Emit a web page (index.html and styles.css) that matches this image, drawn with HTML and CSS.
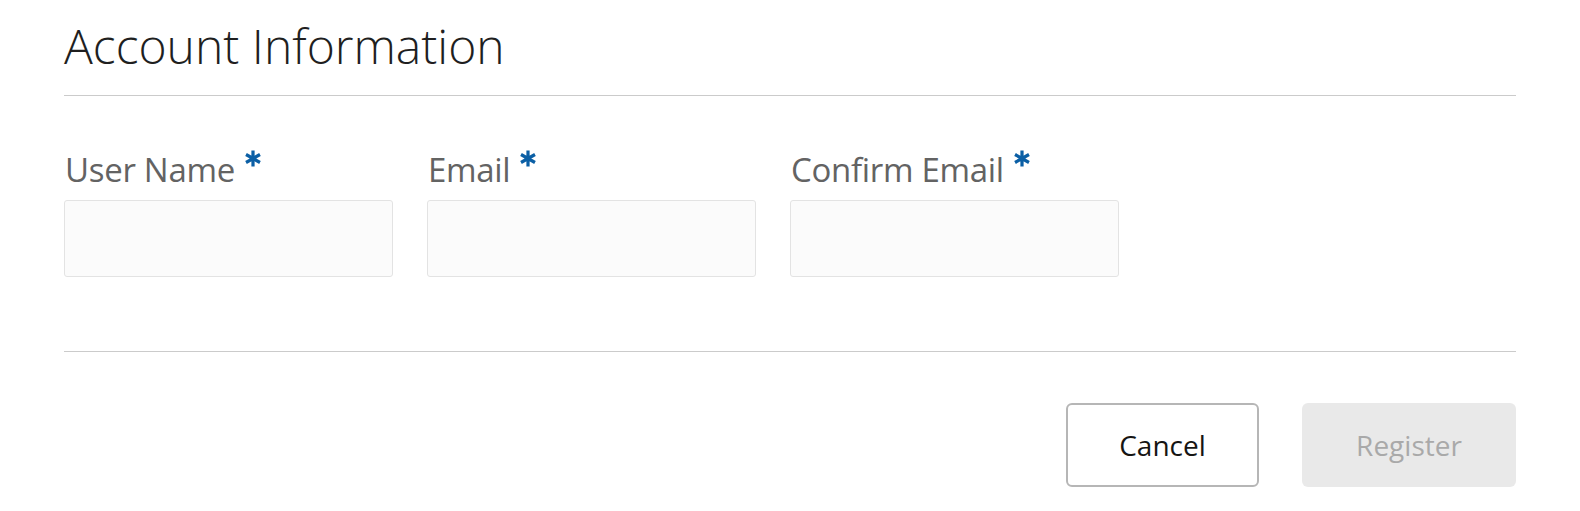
FILE: index.html
```html
<!DOCTYPE html>
<html lang="en">
<head>
<meta charset="utf-8">
<title>Account Information</title>
<link rel="stylesheet" href="styles.css">
</head>
<body>
<div class="page">
  <header class="section-head">
    <h1 class="title">Account Information</h1>
  </header>
  <form class="form">
    <div class="fields">
      <div class="field">
        <label class="label">User Name<svg class="req" viewBox="0 0 18 18" aria-hidden="true"><path d="M9 0.5V17.5M1.6 4.75L16.4 13.25M1.6 13.25L16.4 4.75"/></svg></label>
        <div class="input"></div>
      </div>
      <div class="field">
        <label class="label">Email<svg class="req" viewBox="0 0 18 18" aria-hidden="true"><path d="M9 0.5V17.5M1.6 4.75L16.4 13.25M1.6 13.25L16.4 4.75"/></svg></label>
        <div class="input"></div>
      </div>
      <div class="field">
        <label class="label">Confirm Email<svg class="req" viewBox="0 0 18 18" aria-hidden="true"><path d="M9 0.5V17.5M1.6 4.75L16.4 13.25M1.6 13.25L16.4 4.75"/></svg></label>
        <div class="input"></div>
      </div>
    </div>
    <div class="actions">
      <button type="button" class="btn btn-cancel">Cancel</button>
      <button type="button" class="btn btn-register" disabled>Register</button>
    </div>
  </form>
</div>
</body>
</html>
```

FILE: styles.css
```css
html, body {
  margin: 0;
  padding: 0;
  background: #ffffff;
}
body {
  font-family: "Open Sans", "Liberation Sans", sans-serif;
}
.page {
  padding: 16px 64px 0 64px;
}
.section-head {
  border-bottom: 1px solid #cbcbcb;
  padding-bottom: 19px;
}
.title {
  margin: 0;
  font-size: 48px;
  font-weight: 300;
  line-height: 60px;
  color: #1f1f1f;
  letter-spacing: 0;
}
.form {
  margin: 0;
}
.fields {
  display: flex;
  gap: 34px;
  padding-top: 54px;
  padding-bottom: 74px;
  border-bottom: 1px solid #cbcbcb;
}
.field {
  width: 329px;
  display: flex;
  flex-direction: column;
}
.label {
  display: flex;
  align-items: flex-start;
  font-size: 33px;
  line-height: 40px;
  height: 40px;
  color: #636363;
  padding-left: 1px;
  letter-spacing: -0.3px;
}
.req {
  width: 18px;
  height: 17px;
  margin-left: 9px;
  margin-top: 0px;
  fill: none;
  stroke: #0b5fa5;
  stroke-width: 3.4;
  stroke-linecap: butt;
}
.input {
  margin-top: 10px;
  height: 75px;
  background: #fbfbfb;
  border: 1px solid #e3e3e3;
  border-radius: 3px;
}
.actions {
  display: flex;
  justify-content: flex-end;
  gap: 43px;
  padding-top: 51px;
}
.btn {
  height: 84px;
  border-radius: 6px;
  font-family: "Open Sans", "Liberation Sans", sans-serif;
  font-size: 28px;
  padding: 0;
  cursor: pointer;
}
.btn-cancel {
  width: 193px;
  background: #ffffff;
  border: 2px solid #b6b6b6;
  color: #161513;
}
.btn-register {
  width: 214px;
  background: #e9e9e9;
  border: none;
  color: #a9a9a9;
}
```
